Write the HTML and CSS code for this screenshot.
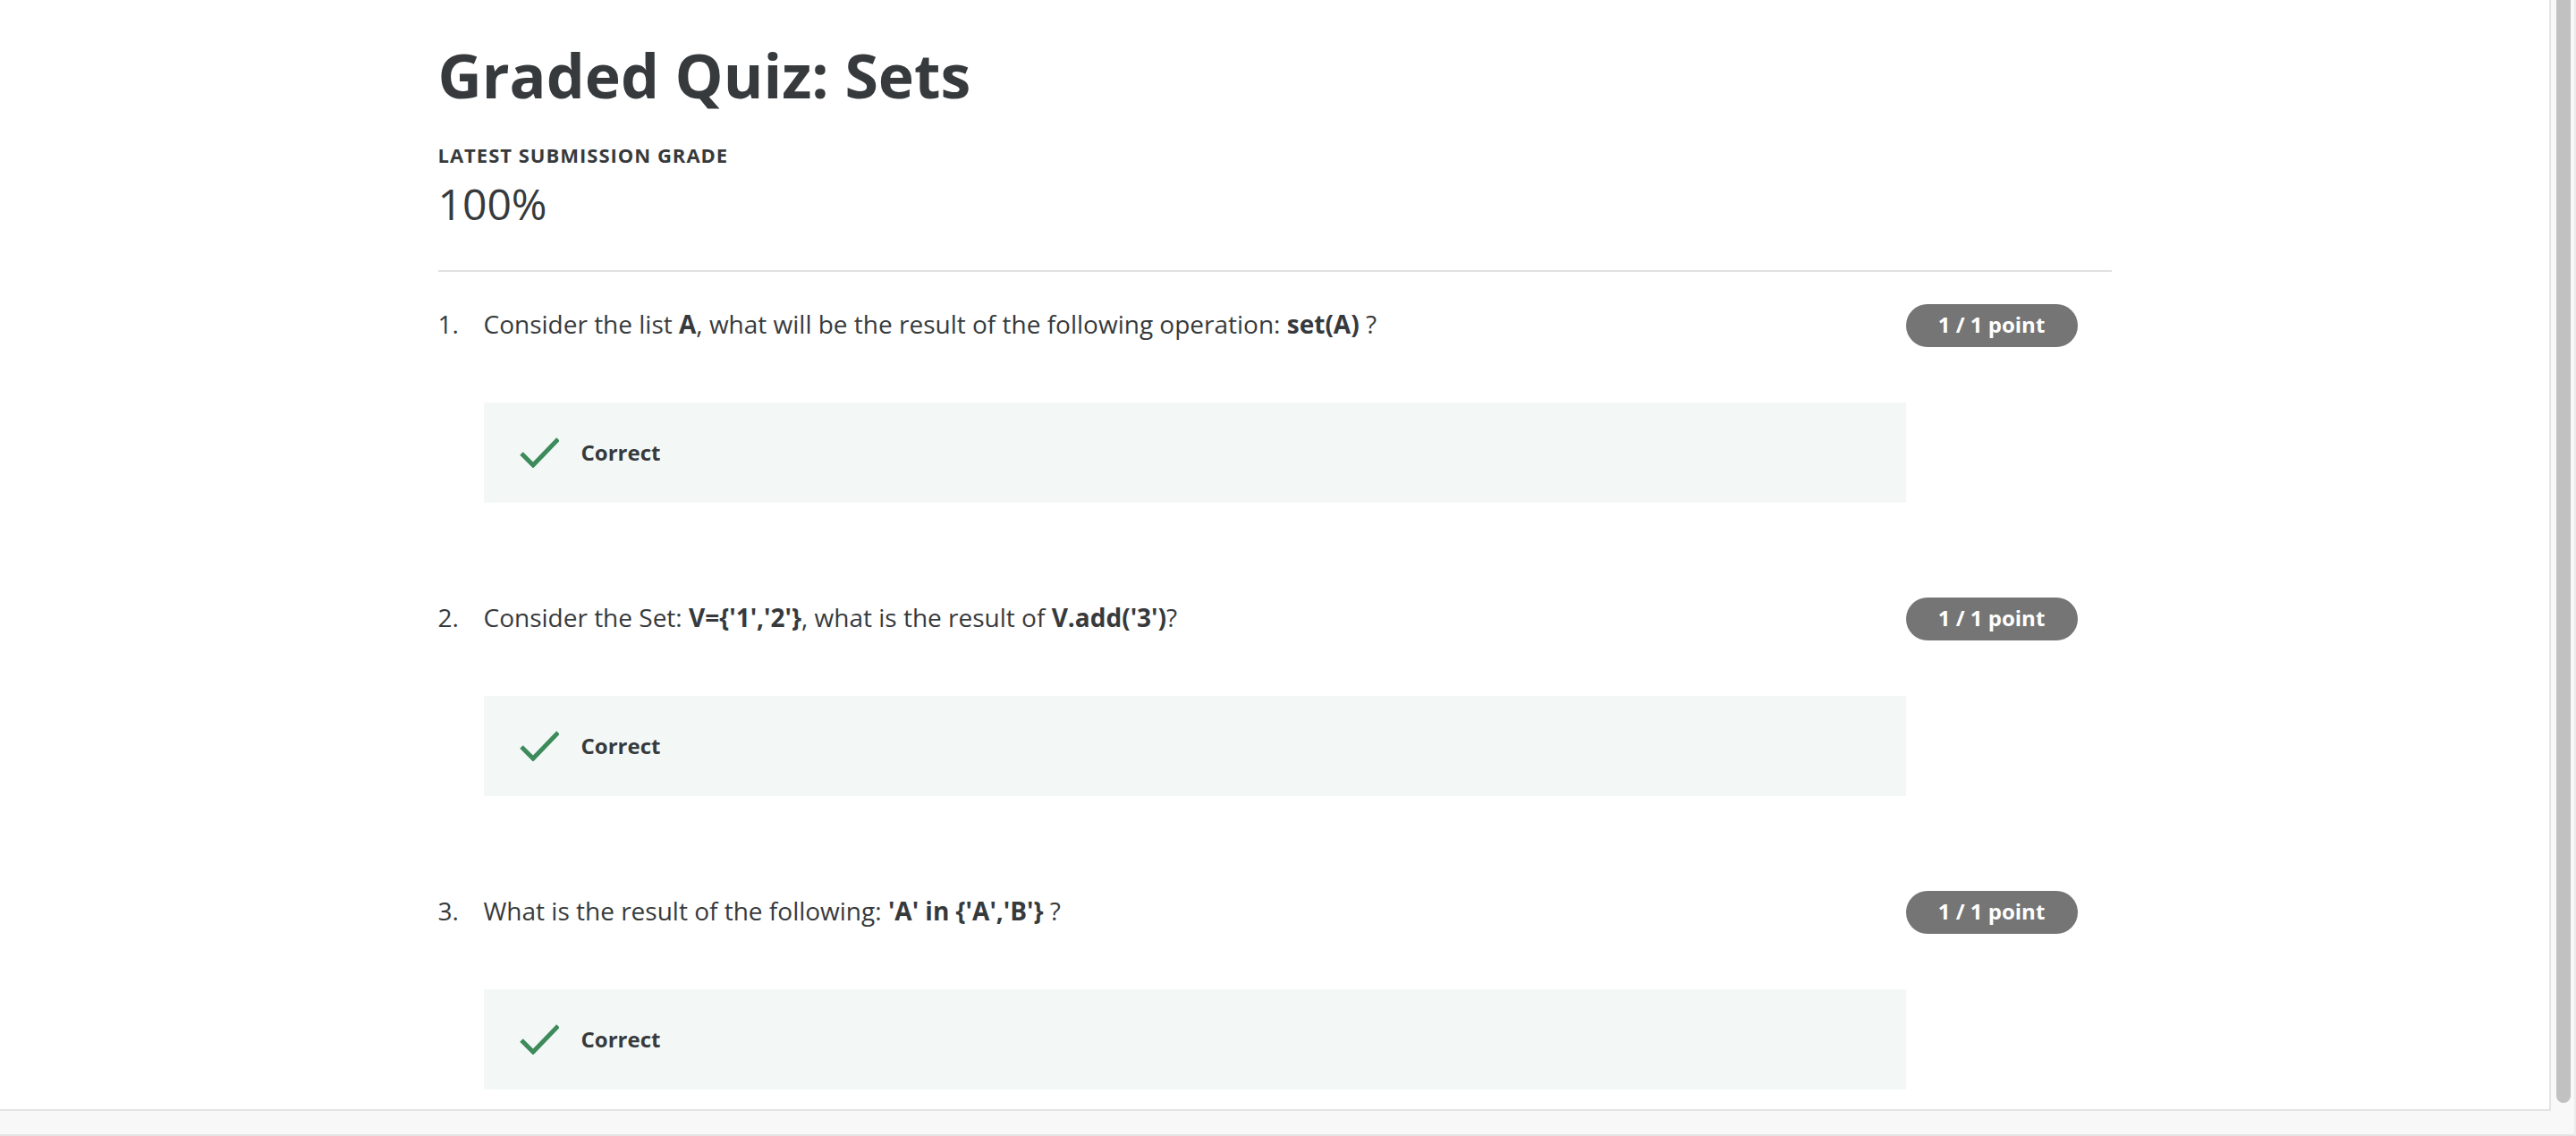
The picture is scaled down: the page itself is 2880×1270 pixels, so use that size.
FILE: index.html
```html
<!DOCTYPE html>
<html lang="en">
<head>
<meta charset="utf-8">
<title>Graded Quiz: Sets</title>
<link rel="stylesheet" href="styles.css">
</head>
<body>
<main class="viewport">
  <div class="page">
    <h1 class="title">Graded Quiz: Sets</h1>
    <div class="grade-label">LATEST SUBMISSION GRADE</div>
    <div class="grade-value">100%</div>
    <hr class="divider">
    <ol class="questions">
      <li class="question">
        <span class="q-num">1.</span>
        <div class="q-body">
          <p class="q-text">Consider the list <strong>A</strong>, what will be the result of the following operation: <strong>set(A)</strong> ?</p>
          <div class="feedback">
            <svg class="check" width="44" height="34" viewBox="0 0 44 34" aria-hidden="true"><polyline points="2,18 15,31 43,2" fill="none" stroke="#3d8a5b" stroke-width="5"/></svg>
            <span class="feedback-text">Correct</span>
          </div>
        </div>
        <span class="badge">1 / 1 point</span>
      </li>
      <li class="question">
        <span class="q-num">2.</span>
        <div class="q-body">
          <p class="q-text">Consider the Set: <strong>V={'1','2'}</strong>, what is the result of <strong>V.add('3')</strong>?</p>
          <div class="feedback">
            <svg class="check" width="44" height="34" viewBox="0 0 44 34" aria-hidden="true"><polyline points="2,18 15,31 43,2" fill="none" stroke="#3d8a5b" stroke-width="5"/></svg>
            <span class="feedback-text">Correct</span>
          </div>
        </div>
        <span class="badge">1 / 1 point</span>
      </li>
      <li class="question">
        <span class="q-num">3.</span>
        <div class="q-body">
          <p class="q-text">What is the result of the following: <strong>'A' in {'A','B'}</strong> ?</p>
          <div class="feedback">
            <svg class="check" width="44" height="34" viewBox="0 0 44 34" aria-hidden="true"><polyline points="2,18 15,31 43,2" fill="none" stroke="#3d8a5b" stroke-width="5"/></svg>
            <span class="feedback-text">Correct</span>
          </div>
        </div>
        <span class="badge">1 / 1 point</span>
      </li>
    </ol>
  </div>
</main>
<div class="vscroll"><div class="thumb"></div></div>
<div class="hscroll"></div>
</body>
</html>
```
FILE: styles.css
```css
html, body {
  margin: 0;
  padding: 0;
}
body {
  height: 100vh;
  overflow: hidden;
  display: grid;
  grid-template-columns: 1fr 28px;
  grid-template-rows: 1fr 28px;
  background: #f8f8f8;
  font-family: "Open Sans", "Noto Sans", sans-serif;
  color: #373a3c;
}
.viewport {
  grid-column: 1;
  grid-row: 1;
  background: #ffffff;
  border-right: 2px solid #e4e4e4;
  border-bottom: 2px solid #e4e4e4;
  overflow: hidden;
}
.page {
  width: 1871px;
  margin: 0 auto;
  padding-top: 41px;
}
.title {
  margin: 0;
  font-size: 68px;
  font-weight: 700;
  line-height: 86px;
}
.grade-label {
  margin-top: 31px;
  font-size: 22px;
  font-weight: 700;
  line-height: 30px;
  letter-spacing: 1px;
}
.grade-value {
  margin-top: 8px;
  font-size: 48px;
  font-weight: 400;
  line-height: 64px;
}
.divider {
  margin: 42px 0 0;
  border: 0;
  height: 2px;
  background: #e1e1e1;
}
.questions {
  list-style: none;
  margin: 36px 0 0;
  padding: 0;
}
.question {
  display: grid;
  grid-template-columns: 51px 1fr 192px 38px;
  align-items: start;
  margin-bottom: 106px;
}
.q-num {
  font-size: 28px;
  line-height: 44px;
}
.q-text {
  margin: 0;
  font-size: 28px;
  line-height: 44px;
}
.q-text strong {
  font-weight: 700;
}
.feedback {
  margin-top: 66px;
  height: 112px;
  background: #f3f8f6;
  display: flex;
  align-items: center;
  padding-left: 40px;
  gap: 25px;
}
.check {
  display: block;
  flex: none;
}
.feedback-text {
  font-size: 24px;
  font-weight: 700;
  line-height: 32px;
}
.badge {
  height: 48px;
  box-sizing: border-box;
  padding-bottom: 2px;
  border-radius: 24px;
  background: #757575;
  color: #ffffff;
  font-size: 24px;
  font-weight: 700;
  line-height: 46px;
  text-align: center;
}
.vscroll {
  grid-column: 2;
  grid-row: 1 / 3;
  background: #f8f8f8;
  border-right: 2px solid #ebebeb;
  border-bottom: 2px solid #e4e4e4;
  padding-left: 6px;
}
.thumb {
  width: 16px;
  height: 1233px;
  background: #c1c1c1;
  border-radius: 0 0 8px 8px;
}
.hscroll {
  grid-column: 1;
  grid-row: 2;
  background: #f8f8f8;
  border-bottom: 2px solid #e4e4e4;
}
```
